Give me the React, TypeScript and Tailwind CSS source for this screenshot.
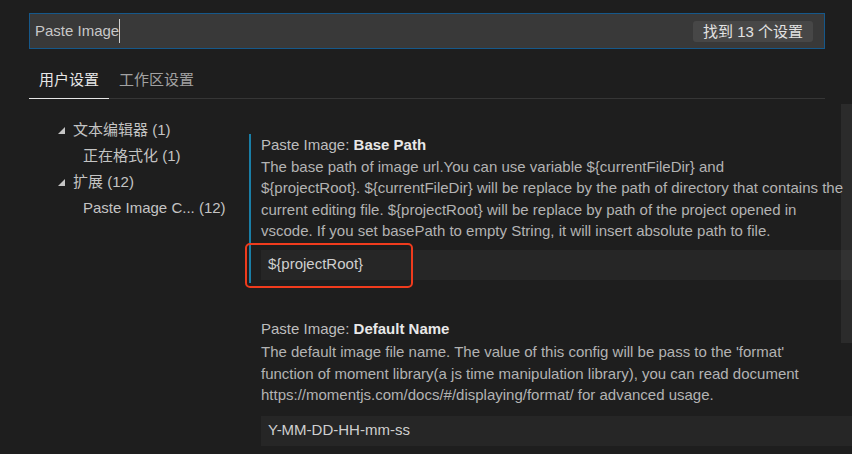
const font = "font-['Liberation_Sans','Noto_Sans_CJK_SC',sans-serif]"

function Twistie() {
  return (
    <svg width="7" height="7" viewBox="0 0 7 7" className="shrink-0">
      <path d="M7 0 L7 7 L0 7 Z" fill="#c5c5c5" />
    </svg>
  )
}

function TreeRow({
  label,
  count,
  level,
}: {
  label: string
  count: number
  level: number
}) {
  return (
    <div className="h-[26px] flex items-center whitespace-nowrap">
      {level === 0 ? (
        <div className="w-[73px] pl-[58px] flex items-center">
          <Twistie />
        </div>
      ) : (
        <div className="w-[83px]" />
      )}
      <span>
        {label} ({count})
      </span>
    </div>
  )
}

function Setting({
  name,
  lines,
  value,
  focused,
  gap,
}: {
  name: string
  lines: string[]
  value: string
  focused?: boolean
  gap: "small" | "large"
}) {
  return (
    <div
      className={
        focused
          ? "border-l-2 border-[#1a7ea6] pl-[10px] pb-[3px]"
          : "border-l-2 border-transparent pl-[10px] pb-[3px]"
      }
    >
      <div
        className={
          gap === "small"
            ? "leading-[21.5px] text-[#bdbdbd] whitespace-nowrap"
            : "leading-[21.5px] mb-[2px] text-[#bdbdbd] whitespace-nowrap"
        }
      >
        Paste Image: <span className="font-semibold text-[#e8e8e8]">{name}</span>
      </div>
      {lines.map((l) => (
        <div key={l} className="leading-[21.5px] text-[#b3b3b3] whitespace-nowrap">
          {l}
        </div>
      ))}
      <div
        className={
          gap === "small"
            ? "mt-[8px] h-[30px] bg-[#262626] flex items-center pl-[7px] text-[#cfcfcf] whitespace-nowrap"
            : "mt-[10px] h-[30px] bg-[#262626] flex items-center pl-[7px] text-[#cfcfcf] whitespace-nowrap"
        }
      >
        {value}
      </div>
    </div>
  )
}

export default function App() {
  return (
    <div
      className={`relative w-[852px] h-[454px] overflow-hidden bg-[#1e1e1e] text-[15px] ${font}`}
    >
      <div className="pt-[13px] pl-[29px] pr-[27px]">
        <div className="h-[36px] border border-[#16588a] bg-[#393939] flex items-center pl-[5px] pr-[11px]">
          <span className="text-[#c8c8c8]">Paste Image</span>
          <span className="w-px h-[24px] bg-[#d0d0d0]" />
          <span className="ml-auto h-[21px] px-[10px] rounded-[3px] bg-[#474747] text-[#e2e2e2] leading-[21px]">
            找到 13 个设置
          </span>
        </div>

        <div className="mt-[20px] flex border-b border-[#363636]">
          <div className="-mb-px px-[10px] pt-[1px] pb-[8px] leading-[20px] border-b border-[#e6e6e6] text-[#e6e6e6]">
            用户设置
          </div>
          <div className="px-[10px] pt-[1px] pb-[8px] leading-[20px] text-[#a2a2a2]">
            工作区设置
          </div>
        </div>
      </div>

      <div className="flex">
        <div className="w-[249px] shrink-0 pt-[18px] text-[#c4c4c4]">
          <TreeRow label="文本编辑器" count={1} level={0} />
          <TreeRow label="正在格式化" count={1} level={1} />
          <TreeRow label="扩展" count={12} level={0} />
          <TreeRow label="Paste Image C..." count={12} level={1} />
        </div>

        <div className="flex-1 min-w-0 pt-[35px] flex flex-col gap-[35px]">
          <Setting
            focused
            gap="small"
            name="Base Path"
            lines={[
              "The base path of image url.You can use variable ${currentFileDir} and",
              "${projectRoot}. ${currentFileDir} will be replace by the path of directory that contains the",
              "current editing file. ${projectRoot} will be replace by path of the project opened in",
              "vscode. If you set basePath to empty String, it will insert absolute path to file.",
            ]}
            value="${projectRoot}"
          />
          <Setting
            gap="large"
            name="Default Name"
            lines={[
              "The default image file name. The value of this config will be pass to the 'format'",
              "function of moment library(a js time manipulation library), you can read document",
              "https://momentjs.com/docs/#/displaying/format/ for advanced usage.",
            ]}
            value="Y-MM-DD-HH-mm-ss"
          />
        </div>
      </div>

      {/* scrollbar slider */}
      <div className="absolute right-0 top-[104px] w-[11px] h-[239px] bg-white/[0.06]" />

      {/* highlight box */}
      <div className="absolute left-[245px] top-[243px] w-[168px] h-[45px] border-2 border-[#ef3b1d] rounded-[5px]" />
    </div>
  )
}
